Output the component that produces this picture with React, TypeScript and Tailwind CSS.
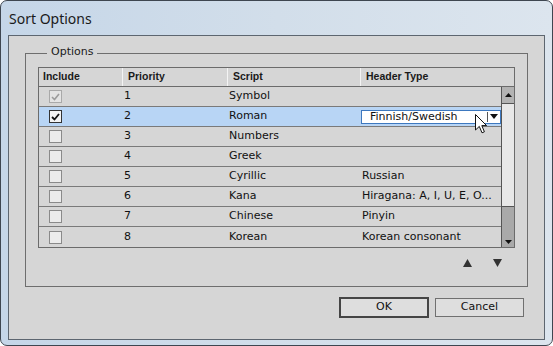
import React from "react";

type Row = {
  include: "checked" | "disabled" | "off";
  priority: number;
  script: string;
  header: string;
  selected?: boolean;
};

const rows: Row[] = [
  { include: "disabled", priority: 1, script: "Symbol", header: "" },
  { include: "checked", priority: 2, script: "Roman", header: "", selected: true },
  { include: "off", priority: 3, script: "Numbers", header: "" },
  { include: "off", priority: 4, script: "Greek", header: "" },
  { include: "off", priority: 5, script: "Cyrillic", header: "Russian" },
  { include: "off", priority: 6, script: "Kana", header: "Hiragana: A, I, U, E, O..." },
  { include: "off", priority: 7, script: "Chinese", header: "Pinyin" },
  { include: "off", priority: 8, script: "Korean", header: "Korean consonant" },
];

function Checkbox({ state }: { state: Row["include"] }) {
  if (state === "disabled") {
    return (
      <div className="flex h-[13px] w-[13px] items-center justify-center border border-[#a9a9a9] bg-[#e4e4e4]">
        <svg width="9" height="8" viewBox="0 0 9 8">
          <path d="M1 4 L3.5 6.5 L8 1" fill="none" stroke="#9c9c9c" strokeWidth="1.6" />
        </svg>
      </div>
    );
  }
  if (state === "checked") {
    return (
      <div className="flex h-[13px] w-[13px] items-center justify-center border border-[#333] bg-[#f4f4f4]">
        <svg width="9" height="8" viewBox="0 0 9 8">
          <path d="M1 4 L3.5 6.5 L8 1" fill="none" stroke="#111" strokeWidth="1.8" />
        </svg>
      </div>
    );
  }
  return <div className="h-[13px] w-[13px] border border-[#8a8a8a] bg-[#ececec]" />;
}

function HeaderDropdown() {
  return (
    <div className="relative ml-[1px] flex h-[14px] flex-1 items-center border border-[#3d78bf] bg-white pl-[8px] text-[#111]">
      <span className="flex-1 leading-none">Finnish/Swedish</span>
      <div className="mr-[2px] flex h-[10px] items-center border-l border-[#555] pl-[2px]">
        <svg width="8" height="5" viewBox="0 0 8 5">
          <polygon points="0,0 8,0 4,5" fill="#111" />
        </svg>
      </div>
      {/* mouse pointer over the dropdown */}
      <svg className="absolute left-[113px] top-[3px] z-10" width="13" height="20" viewBox="0 0 13 20">
        <path
          d="M0.5 0.5 L0.5 16 L4.3 12.4 L7 18.8 L9.4 17.8 L6.8 11.6 L11.6 11.6 Z"
          fill="#fff"
          stroke="#111"
          strokeWidth="1"
          strokeLinejoin="round"
        />
      </svg>
    </div>
  );
}

export default function App() {
  return (
    <div className="h-[346px] w-[553px] bg-white font-['DejaVu_Sans',sans-serif] text-[11px] text-[#111]">
      <div className="flex h-full w-full flex-col rounded-[7px] border border-[#3e4650] bg-gradient-to-r from-[#c5d6e8] via-[#d2deea] to-[#dce5ee]">
        {/* title bar */}
        <div className="flex h-[34px] shrink-0 items-center pl-[8px] pt-[1px] font-['Noto_Sans',sans-serif] text-[14px] text-[#1a1a1a]">
          Sort Options
        </div>

        {/* client area */}
        <div className="mx-[7px] flex h-[305px] shrink-0 flex-col border border-[#5d6670] bg-[#d6d6d6]">
          <fieldset className="mx-[16px] mt-[9px] border border-[#6e6e6e] px-[12px] pb-[19px]">
            <legend className="ml-[9px] px-[4px] pb-[3px] leading-[14px] text-[#1a1a1a]">Options</legend>

            {/* table */}
            <div className="mt-[5px] flex flex-col border border-[#6b6b6b]">
              <div className="flex h-[19px] border-b border-[#6b6b6b] font-['Liberation_Sans',sans-serif] text-[10.5px] font-bold text-[#1a1a1a]">
                <div className="flex w-[83px] items-center pl-[4px]">Include</div>
                <div className="flex w-[105px] items-center border-l border-[#f4f4f4] pl-[5px]">Priority</div>
                <div className="flex w-[133px] items-center border-l border-[#f4f4f4] pl-[5px]">Script</div>
                <div className="flex flex-1 items-center border-l border-[#f4f4f4] pl-[5px]">Header Type</div>
              </div>

              <div className="flex">
                <div className="flex flex-1 flex-col">
                  {rows.map((r, i) => (
                    <div
                      key={r.priority}
                      className={
                        "flex h-[20px] " +
                        (i < rows.length - 1 ? "border-b border-[#7a7a7a] " : "") +
                        (r.selected ? "bg-[#b8d5f5]" : "bg-[#d6d6d6]")
                      }
                    >
                      <div className="flex w-[83px] items-center pl-[10px]">
                        <Checkbox state={r.include} />
                      </div>
                      <div className="flex w-[105px] items-center pl-[2px]">{r.priority}</div>
                      <div className="flex w-[133px] items-center pl-[2px]">{r.script}</div>
                      {r.selected ? (
                        <div className="flex flex-1 items-center">
                          <HeaderDropdown />
                        </div>
                      ) : (
                        <div className="flex flex-1 items-center overflow-hidden whitespace-nowrap pl-[2px]">
                          {r.header}
                        </div>
                      )}
                    </div>
                  ))}
                </div>

                {/* scrollbar */}
                <div className="flex w-[13px] flex-col border-l border-[#555]">
                  <div className="flex h-[17px] items-center justify-center border-b border-[#555] bg-[#b3b3b3]">
                    <svg width="7" height="4" viewBox="0 0 7 4">
                      <polygon points="0,4 7,4 3.5,0" fill="#111" />
                    </svg>
                  </div>
                  <div className="flex-1 bg-[#e8e8e8]" />
                  <div className="flex h-[41px] items-end justify-center border-t border-[#555] bg-[#a9a9a9] pb-[3px]">
                    <svg width="7" height="4" viewBox="0 0 7 4">
                      <polygon points="0,0 7,0 3.5,4" fill="#111" />
                    </svg>
                  </div>
                </div>
              </div>
            </div>

            {/* move up / down */}
            <div className="mt-[11px] flex justify-end gap-[21px] pr-[13px]">
              <svg width="9" height="8" viewBox="0 0 9 8">
                <polygon points="0,8 9,8 4.5,0" fill="#333" />
              </svg>
              <svg width="9" height="8" viewBox="0 0 9 8">
                <polygon points="0,0 9,0 4.5,8" fill="#333" />
              </svg>
            </div>
          </fieldset>

          {/* buttons */}
          <div className="mt-[10px] flex items-center justify-end gap-[6px] pr-[20px]">
            <button className="flex h-[21px] w-[90px] items-center justify-center border-2 border-[#454545] bg-[#dedede] text-[#111]">
              OK
            </button>
            <button className="flex h-[19px] w-[89px] items-center justify-center border border-[#707070] bg-[#dedede] text-[#111]">
              Cancel
            </button>
          </div>
        </div>
      </div>
    </div>
  );
}
